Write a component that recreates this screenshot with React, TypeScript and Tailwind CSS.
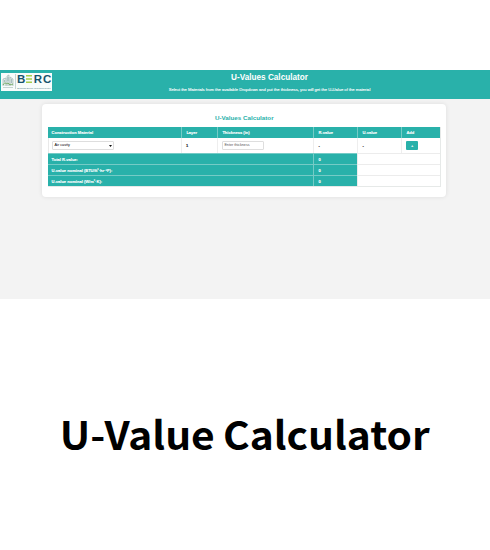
const headings = ['Construction Material', 'Layer', 'Thickness (in)', 'R-value', 'U-value', 'Add'];
const totals = ['Total R-value:', 'U-value nominal (BTU/ft²·hr·°F):', 'U-value nominal (W/m²·K):'];

function Logo() {
  return (
    <div className="flex h-[18.5px] w-[51px] shrink-0 items-center bg-[#f8fcfb] pl-[1px]">
      <svg className="h-[15px] w-[12px] shrink-0" viewBox="0 0 12 15" fill="none">
        <path d="M1 12V5l3-1v8M5 12V2l2-1v11M8 12V3l3 2v7" fill="#e1ebe8" stroke="#93aead" strokeWidth=".6" />
        <path d="M2 7h1M5.5 4h1M5.5 6h1M9 6h1M9 8h1" stroke="#577d83" strokeWidth=".8" />
        <path d="M1 11c2-4 3 0 5-2 1 2 3 2 5 1" stroke="#76ae63" strokeWidth="1" />
        <path d="M1 13.5h10" stroke="#a5bcb9" strokeWidth=".6" />
      </svg>
      <div className="ml-[1px] h-[15px] w-px shrink-0 bg-[#c6d5d6]" />
      <div className="flex w-[36px] shrink-0 flex-col items-center">
        <div className="flex h-[11px] w-full items-center justify-between px-[1px] font-['Liberation_Sans',Arial,sans-serif] text-[11.5px] leading-[11px] font-bold text-[#17546d]">
          <span className="w-[8px]">B</span>
          <svg className="h-[8px] w-[6px]" viewBox="0 0 6 8"><path d="M0 .8h6M0 4h6M0 7.2h6" stroke="#a6ce4b" strokeWidth="1.6" /></svg>
          <span className="w-[8px]">R</span>
          <span className="w-[8px]">C</span>
        </div>
        <span className="mt-[2px] text-[2.2px] leading-[3px] whitespace-nowrap text-[#4d7b85]">Buildings Energy Research Center</span>
      </div>
    </div>
  );
}

export default function App() {
  return (
    <main className="h-[550px] w-[490px] overflow-hidden bg-white pt-[69.5px] font-['Liberation_Sans',Arial,sans-serif]">
      <section className="h-[229px] bg-[#f3f3f3]">
        <header className="flex h-[29.5px] bg-[#29b1aa] pt-[3px] pl-[1px] text-white">
          <Logo />
          <div className="flex flex-1 flex-col items-center pr-[3px] text-center">
            <h1 className="text-[8.2px] leading-[10px] font-bold">U-Values Calculator</h1>
            <p className="mt-[4px] text-[4.1px] leading-[6px] whitespace-nowrap [-webkit-text-stroke:0.1px_white]">Select the Materials from the available Dropdown and put the thickness, you will get the U-Ualue of the material</p>
          </div>
        </header>
        <div className="mt-[5px] ml-[42px] h-[93px] w-[404px] rounded-[4px] bg-white pt-[10px] pr-[5px] pl-[5.5px] shadow-[0_0_4px_#00000018]">
          <h2 className="h-[13px] text-center text-[6.25px] leading-[8px] font-bold text-[#29b1aa]">U-Values Calculator</h2>
          <div className="w-[393.5px] border-r border-b border-[#e6e9e8] text-[4.05px] leading-[5px]">
            <div className="grid h-[11px] grid-cols-[133.9px_36px_96px_44px_44px_1fr] bg-[#29b1aa] font-bold text-white [-webkit-text-stroke:0.1px_white]">
              {headings.map((label, i) => (
                <div key={label} className={`flex items-center pl-[4px] whitespace-nowrap ${i ? 'border-l border-[#75cbc6]' : ''}`}>{label}</div>
              ))}
            </div>
            <div className="grid h-[15px] grid-cols-[133.9px_36px_96px_44px_44px_1fr] text-[#222]">
              <div className="flex items-center border-l border-[#e9e9e9] pl-[3px]">
                <div className="flex h-[9px] w-[62px] items-center justify-between rounded-[1px] border border-[#dedede] pr-[1px] pl-[2px] text-[3.8px] text-black">
                  <span>Air cavity</span>
                  <svg className="h-[2px] w-[3px]" viewBox="0 0 3 2"><path d="M0 0h3L1.5 2z" fill="#111" /></svg>
                </div>
              </div>
              <div className="flex items-center border-l border-[#eee] pl-[3.5px] [-webkit-text-stroke:0.2px_black]">1</div>
              <div className="flex items-center border-l border-[#eee] pl-[3.5px]">
                <div className="flex h-[9px] w-[42px] items-center rounded-[1px] border border-[#dedede] pl-[1.5px] text-[3.7px] text-[#555]">Enter thickness</div>
              </div>
              <div className="flex items-center border-l border-[#eee] pl-[4px] [-webkit-text-stroke:0.1px_black]">-</div>
              <div className="flex items-center border-l border-[#eee] pl-[4px] [-webkit-text-stroke:0.1px_black]">-</div>
              <div className="flex items-center border-l border-[#eee] pl-[3.5px]">
                <div className="flex h-[9px] w-[12.5px] items-center justify-center rounded-[1px] bg-[#29b1aa] font-bold text-white">+</div>
              </div>
            </div>
            {totals.map((label) => (
              <div key={label} className="grid h-[11px] grid-cols-[265.9px_44px_1fr] font-bold text-white [-webkit-text-stroke:0.1px_white]">
                <div className="flex items-center border-t border-[#75cbc6] bg-[#29b1aa] pl-[4px]">{label}</div>
                <div className="flex items-center border-t border-l border-[#75cbc6] bg-[#29b1aa] pl-[4px]">0</div>
                <div className="border-t border-l border-[#ececec]" />
              </div>
            ))}
          </div>
        </div>
      </section>
      <div className="flex h-[269px] items-center justify-center font-['Noto_Sans_CJK_SC',sans-serif] text-[38.5px] leading-none font-bold [word-spacing:-1px] whitespace-nowrap text-black"><span className="scale-x-[1.058]">U-Value Calculator</span></div>
    </main>
  );
}
